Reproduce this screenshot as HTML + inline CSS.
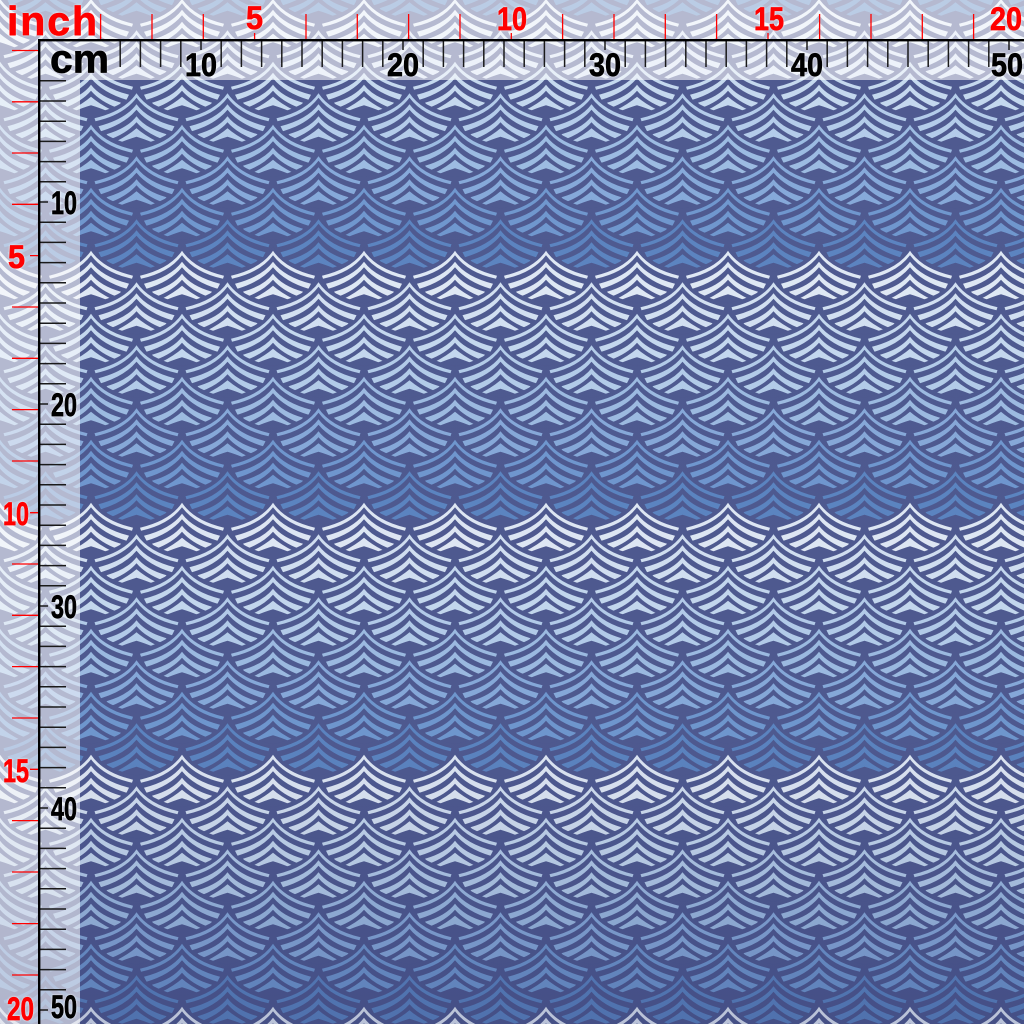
<!DOCTYPE html>
<html><head><meta charset="utf-8"><title>Fabric</title>
<style>html,body{margin:0;padding:0;width:1024px;height:1024px;overflow:hidden;background:#4f5a90}svg{display:block;overflow:hidden}
.t{font-family:"Liberation Sans",sans-serif;font-weight:700;stroke-linejoin:round;filter:drop-shadow(0 0 1px #fff)}
.k{fill:#000;stroke:#000;stroke-width:.7px}.r{fill:#f00;stroke:#f00;stroke-width:.7px}</style></head><body>
<svg xmlns="http://www.w3.org/2000/svg" width="1024" height="1024" viewBox="0 0 1024 1024">
<defs>
<linearGradient id="sh" x1="0" y1="0" x2="0" y2="1"><stop offset="0" stop-color="#1c2560" stop-opacity="0"/><stop offset=".72" stop-color="#1c2560" stop-opacity=".02"/><stop offset="1" stop-color="#1c2560" stop-opacity=".2"/></linearGradient>
<g id="s">
<path fill="#4f5a90" d="M0-4Q-12 14-46 21L-46 62 46 62 46 21Q12 14 0-4Z"/>
<path fill="currentColor" d="M0 0Q-12 18-42 25L-41 28Q-13 22 0 4.5Q13 22 41 28L42 25Q12 18 0 0Z"/>
<path fill="currentColor" d="M0 11Q-11 26-38 33L-35.5 38Q-12 31 0 16.5Q12 31 35.5 38L38 33Q11 26 0 11Z"/>
<path fill="currentColor" d="M0 23Q-9 35-30 41L-26 46Q-9 39.5 0 29Q9 39.5 26 46L30 41Q9 35 0 23Z"/>
<path fill="currentColor" d="M0 35Q-8 42-21 48.5L-18 50Q-7 45.5 0 43.5Q7 45.5 18 50L21 48.5Q8 42 0 35Z"/>
</g>
<g id="a"><use href="#s" x="0"/><use href="#s" x="91"/><use href="#s" x="182"/><use href="#s" x="273"/><use href="#s" x="364"/><use href="#s" x="455"/><use href="#s" x="546"/><use href="#s" x="637"/><use href="#s" x="728"/><use href="#s" x="819"/><use href="#s" x="910"/><use href="#s" x="1001"/><use href="#s" x="1092"/></g>
<g id="p">
<use href="#a" y="0" x="0" color="#e0e9f5"/>
<use href="#a" y="31.5" x="-45.5" color="#d3e1f2"/>
<use href="#a" y="63" x="0" color="#c5d9ef"/>
<use href="#a" y="94.5" x="-45.5" color="#b4cdea"/>
<use href="#a" y="126" x="0" color="#9dbce2"/>
<use href="#a" y="157.5" x="-45.5" color="#87aada"/>
<use href="#a" y="189" x="0" color="#7098cf"/>
<use href="#a" y="220.5" x="-45.5" color="#5c85c1"/>
</g>
<g id="hb" fill="none"><path d="M20.2 40v27m20.2-27v27m20.2-27v27m20.2-27v27m20.2-27v27m20.2-27v27m20.2-27v27m20.2-27v27m20.2-27v27m20.2-27v10"/></g>
<g id="vb" fill="none"><path d="M40 20.2h26m-26 20.2h26m-26 20.2h26m-26 20.2h26m-26 20.2h26m-26 20.2h26m-26 20.2h26m-26 20.2h26m-26 20.2h26m-26 20.2h8"/></g>
</defs>
<rect width="1024" height="1024" fill="#4f5a90"/>
<use href="#p" y="-253.3"/><use href="#p" y="-1.3"/><use href="#p" y="250.7"/><use href="#p" y="502.7"/><use href="#p" y="754.7"/><use href="#p" y="1006.7"/>
<rect width="1024" height="1024" fill="url(#sh)"/>
<rect width="1024" height="80" fill="#fff" fill-opacity=".58"/>
<rect y="80" width="80" height="944" fill="#fff" fill-opacity=".58"/>

<g stroke="#f00" stroke-width="1.3" fill="none">
<path d="M100.6 14V40M152 14V40M203.3 14V40M254.6 33V40M306 14V40M357.3 14V40M408.6 14V40M460 14V40M511.3 33V40M562.6 14V40M614 14V40M665.3 14V40M716.6 14V40M768 33V40M819.6 14V40M871 14V40M922.3 14V40M973.6 14V40"/>
<path d="M12 50.5H39M12 101.8H39M12 153H39M12 204.3H39M30 255.6H39M12 307H39M12 358.3H39M12 409.6H39M12 461H39M30 512.7H39M12 564H39M12 615.3H39M12 666.6H39M12 718H39M30 769.3H39M12 820.6H39M12 872H39M12 923.6H39M12 975H39"/>
</g>
<g stroke="#1a1a1a" stroke-width="1.5" fill="none">
<path d="M120.2 40v27M140.4 40v27M160.6 40v27M180.8 40v27M201 40v10"/>
<use href="#hb" x="201"/><use href="#hb" x="403"/><use href="#hb" x="605"/><use href="#hb" x="807"/>
<path d="M40 80.8h26M40 101h26M40 121.2h26M40 141.4h26M40 161.6h26M40 181.8h26M40 202h8"/>
<use href="#vb" y="202"/><use href="#vb" y="404"/><use href="#vb" y="606"/><use href="#vb" y="808"/>
</g>
<rect x="38" y="39" width="986" height="2.4" fill="#000"/>
<rect x="38" y="39" width="2.4" height="985" fill="#000"/>

<text class="t r" x="7" y="35" font-size="41" textLength="90" lengthAdjust="spacing">inch</text>
<text class="t k" x="50" y="72.5" font-size="40" textLength="59" lengthAdjust="spacingAndGlyphs">cm</text>

<g class="t k" font-size="32">
<text x="185" y="76" textLength="32" lengthAdjust="spacingAndGlyphs">10</text>
<text x="387" y="76" textLength="32" lengthAdjust="spacingAndGlyphs">20</text>
<text x="589" y="76" textLength="32" lengthAdjust="spacingAndGlyphs">30</text>
<text x="791" y="76" textLength="32" lengthAdjust="spacingAndGlyphs">40</text>
<text x="991" y="76" textLength="32" lengthAdjust="spacingAndGlyphs">50</text>
<text x="51" y="214" textLength="26" lengthAdjust="spacingAndGlyphs">10</text>
<text x="51" y="416" textLength="26" lengthAdjust="spacingAndGlyphs">20</text>
<text x="51" y="618" textLength="26" lengthAdjust="spacingAndGlyphs">30</text>
<text x="51" y="820" textLength="26" lengthAdjust="spacingAndGlyphs">40</text>
<text x="51" y="1018" textLength="26" lengthAdjust="spacingAndGlyphs">50</text>
</g>
<g class="t r" font-size="32">
<text x="246" y="29" textLength="17" lengthAdjust="spacingAndGlyphs">5</text>
<text x="497" y="30" textLength="30" lengthAdjust="spacingAndGlyphs">10</text>
<text x="754" y="30" textLength="30" lengthAdjust="spacingAndGlyphs">15</text>
<text x="990" y="30" textLength="32" lengthAdjust="spacingAndGlyphs">20</text>
<text x="8" y="268" textLength="17" lengthAdjust="spacingAndGlyphs">5</text>
<text x="3" y="525" textLength="26" lengthAdjust="spacingAndGlyphs">10</text>
<text x="3" y="782" textLength="26" lengthAdjust="spacingAndGlyphs">15</text>
<text x="7" y="1020" textLength="27" lengthAdjust="spacingAndGlyphs">20</text>
</g>
</svg>
</body></html>
